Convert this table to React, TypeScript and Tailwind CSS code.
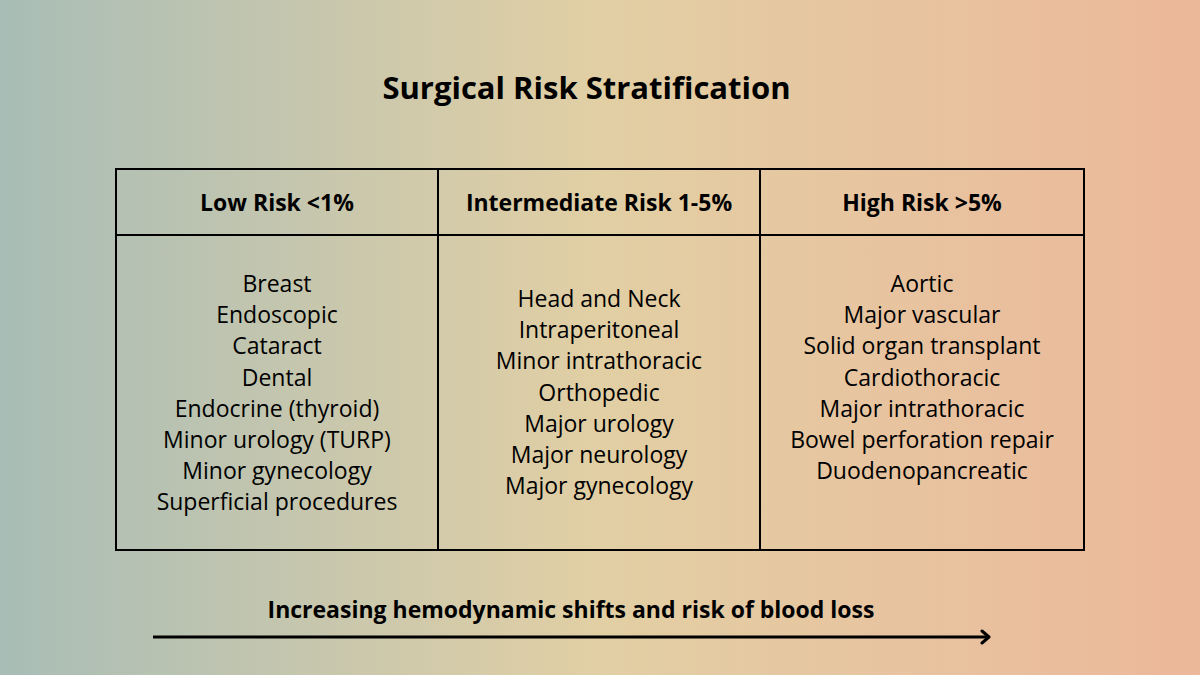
export default function App() {
  const low = [
    "Breast",
    "Endoscopic",
    "Cataract",
    "Dental",
    "Endocrine (thyroid)",
    "Minor urology (TURP)",
    "Minor gynecology",
    "Superficial procedures",
  ];
  const mid = [
    "Head and Neck",
    "Intraperitoneal",
    "Minor intrathoracic",
    "Orthopedic",
    "Major urology",
    "Major neurology",
    "Major gynecology",
  ];
  const high = [
    "Aortic",
    "Major vascular",
    "Solid organ transplant",
    "Cardiothoracic",
    "Major intrathoracic",
    "Bowel perforation repair",
    "Duodenopancreatic",
  ];

  return (
    <div
      className="w-[1200px] h-[675px] bg-gradient-to-r from-[#a8bdb6] via-[#e2cfa4] to-[#ecb89a] text-black flex flex-col items-center"
      style={{ fontFamily: '"Open Sans", "Noto Sans", sans-serif' }}
    >
      <h1 className="mt-[65px] ml-[-27px] text-[31px] leading-[44px] font-bold">
        Surgical Risk Stratification
      </h1>

      <div className="mt-[59px] w-[970px] border-2 border-black grid grid-cols-3">
        <div className="h-[66px] border-r-2 border-b-2 border-black flex items-center justify-center text-[23px] font-bold">
          Low Risk &lt;1%
        </div>
        <div className="h-[66px] border-r-2 border-b-2 border-black flex items-center justify-center text-[23px] font-bold">
          Intermediate Risk 1-5%
        </div>
        <div className="h-[66px] border-b-2 border-black flex items-center justify-center text-[23px] font-bold">
          High Risk &gt;5%
        </div>

        <div className="h-[313px] border-r-2 border-black pt-[32px] flex flex-col items-center text-[23px] leading-[31.2px]">
          {low.map((t) => (
            <div key={t}>{t}</div>
          ))}
        </div>
        <div className="h-[313px] border-r-2 border-black pt-[47px] flex flex-col items-center text-[23px] leading-[31.2px]">
          {mid.map((t) => (
            <div key={t}>{t}</div>
          ))}
        </div>
        <div className="h-[313px] pt-[32px] flex flex-col items-center text-[23px] leading-[31.2px]">
          {high.map((t) => (
            <div key={t}>{t}</div>
          ))}
        </div>
      </div>

      <div className="mt-[44px] ml-[-58px] text-[23px] leading-[28px] font-bold">
        Increasing hemodynamic shifts and risk of blood loss
      </div>

      <svg className="mt-[6px] ml-[-55px]" width="840" height="16" viewBox="0 0 840 16">
        <line x1="0" y1="8" x2="836" y2="8" stroke="black" strokeWidth="3" />
        <path d="M829 2 L836 8 L829 14" fill="none" stroke="black" strokeWidth="3" strokeLinecap="round" strokeLinejoin="round" />
      </svg>
    </div>
  );
}
